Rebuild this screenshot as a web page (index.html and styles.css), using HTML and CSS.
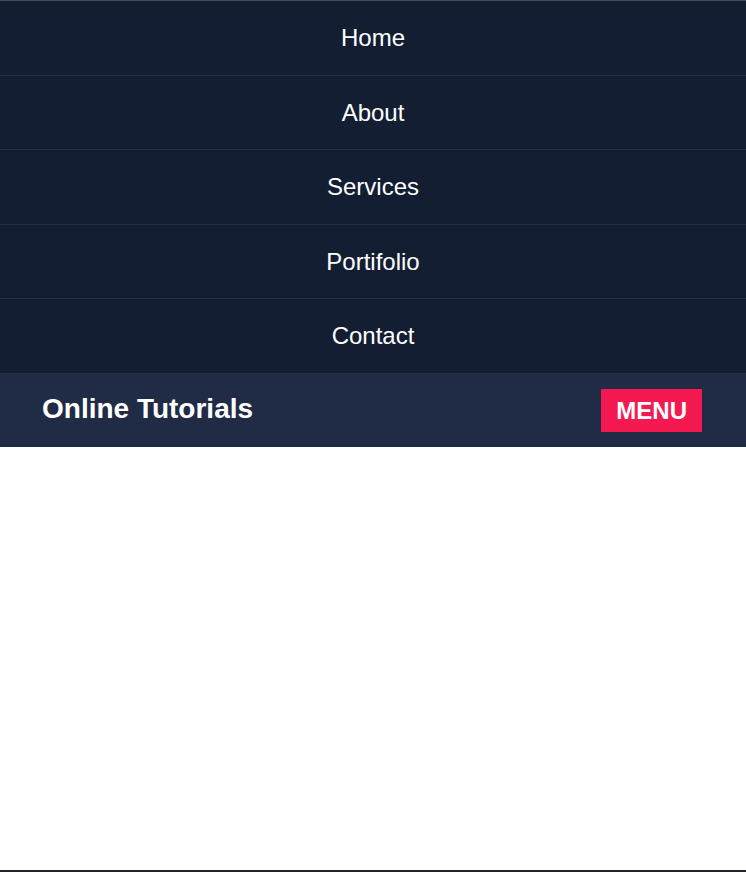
FILE: index.html
```html
<!DOCTYPE html>
<html lang="en">
<head>
<meta charset="utf-8">
<title>Online Tutorials</title>
<link rel="stylesheet" href="styles.css">
</head>
<body>
<div class="page">
  <nav class="menu">
    <a class="menu-item" href="#">Home</a>
    <a class="menu-item" href="#">About</a>
    <a class="menu-item" href="#">Services</a>
    <a class="menu-item" href="#">Portifolio</a>
    <a class="menu-item" href="#">Contact</a>
  </nav>
  <header class="bar">
    <div class="brand">Online Tutorials</div>
    <button class="menu-btn" type="button">MENU</button>
  </header>
  <main class="content"></main>
</div>
</body>
</html>
```
FILE: styles.css
```css
html, body {
  margin: 0;
  padding: 0;
  background: #ffffff;
}
.page {
  min-height: 100vh;
  box-sizing: border-box;
  display: flex;
  flex-direction: column;
  border-top: 1px solid #4a4d55;
  border-bottom: 2px solid #222226;
  font-family: "Liberation Sans", Arial, sans-serif;
}
.menu {
  display: flex;
  flex-direction: column;
  background: #141e32;
}
.menu-item {
  display: block;
  text-align: center;
  color: #ffffff;
  text-decoration: none;
  font-size: 24px;
  line-height: 27.6px;
  padding: 23px 0;
  border-bottom: 1px solid #262f44;
}
.bar {
  display: flex;
  align-items: center;
  justify-content: space-between;
  background: #202b45;
  padding: 15.5px 44px 15px 42px;
}
.brand {
  color: #ffffff;
  font-weight: bold;
  font-size: 28px;
  padding-bottom: 3px;
}
.menu-btn {
  border: 0;
  margin: 0;
  background: #f41a51;
  color: #ffffff;
  font-family: "Liberation Sans", Arial, sans-serif;
  font-weight: bold;
  font-size: 24px;
  line-height: 27px;
  padding: 8px 15px;
  cursor: pointer;
}
.content {
  flex: 1;
}
```
